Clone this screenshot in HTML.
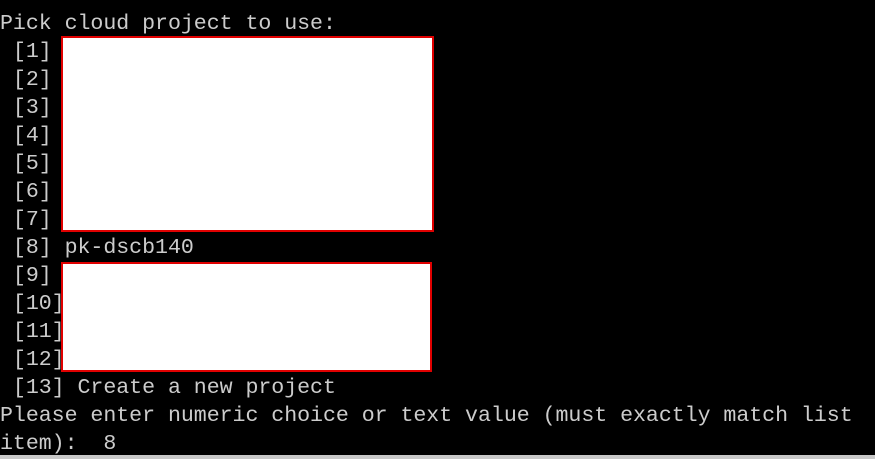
<!DOCTYPE html>
<html><head><style>
html,body{margin:0;padding:0;background:#000;width:875px;height:459px;overflow:hidden;position:relative}
pre{position:absolute;left:0;top:10px;margin:0;font-family:"Liberation Mono",monospace;font-size:21.6px;line-height:28px;color:#cccccc;letter-spacing:-0.04px}
.b{position:absolute;background:#fff;border:2px solid #e00000;box-sizing:border-box}
.bar{position:absolute;left:0;top:455px;width:875px;height:4px;background:#c8c8c8}
</style></head><body>
<pre>Pick cloud project to use:
 [1]
 [2]
 [3]
 [4]
 [5]
 [6]
 [7]
 [8] pk-dscb140
 [9]
 [10]
 [11]
 [12]
 [13] Create a new project
Please enter numeric choice or text value (must exactly match list
item):  8</pre>
<div class="b" style="left:61px;top:36px;width:373px;height:196px"></div>
<div class="b" style="left:61px;top:262px;width:371px;height:110px"></div>
<div class="bar"></div>
</body></html>
